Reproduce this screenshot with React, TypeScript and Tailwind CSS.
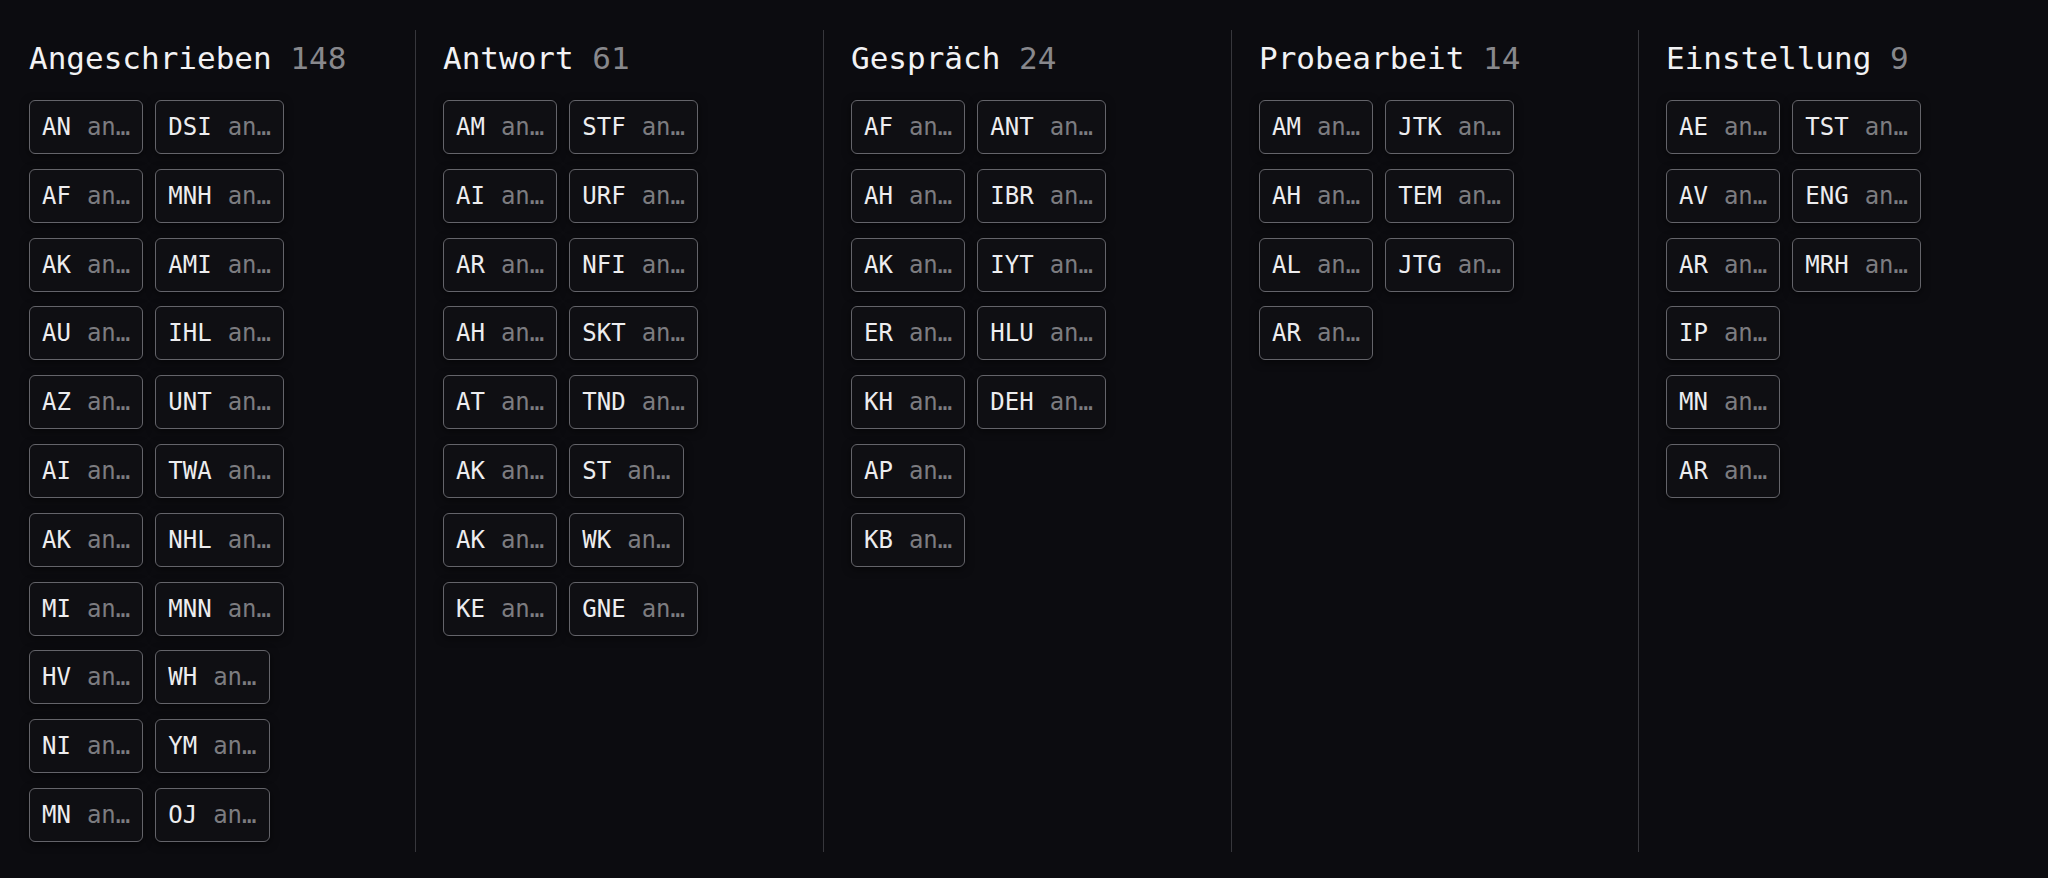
import React from 'react';

type Stage = {
  title: string;
  count: number;
  left: string[];
  right: string[];
};

const stages: Stage[] = [
  {
    title: 'Angeschrieben',
    count: 148,
    left: ['AN', 'AF', 'AK', 'AU', 'AZ', 'AI', 'AK', 'MI', 'HV', 'NI', 'MN'],
    right: ['DSI', 'MNH', 'AMI', 'IHL', 'UNT', 'TWA', 'NHL', 'MNN', 'WH', 'YM', 'OJ'],
  },
  {
    title: 'Antwort',
    count: 61,
    left: ['AM', 'AI', 'AR', 'AH', 'AT', 'AK', 'AK', 'KE'],
    right: ['STF', 'URF', 'NFI', 'SKT', 'TND', 'ST', 'WK', 'GNE'],
  },
  {
    title: 'Gespräch',
    count: 24,
    left: ['AF', 'AH', 'AK', 'ER', 'KH', 'AP', 'KB'],
    right: ['ANT', 'IBR', 'IYT', 'HLU', 'DEH'],
  },
  {
    title: 'Probearbeit',
    count: 14,
    left: ['AM', 'AH', 'AL', 'AR'],
    right: ['JTK', 'TEM', 'JTG'],
  },
  {
    title: 'Einstellung',
    count: 9,
    left: ['AE', 'AV', 'AR', 'IP', 'MN', 'AR'],
    right: ['TST', 'ENG', 'MRH'],
  },
];

const widths = ['w-[415px]', 'w-[408px]', 'w-[408px]', 'w-[407px]', 'w-[410px]'];

function Card({ code }: { code: string }) {
  return (
    <div className="flex h-[54px] w-fit items-center gap-4 rounded-md border border-[#64646a] bg-[#0f0f13] px-3 shadow-[0_2px_8px_rgba(0,0,0,0.55)]">
      <span className="whitespace-nowrap text-[24px] leading-none text-[#ededef]">{code}</span>
      <span className="whitespace-nowrap text-[24px] leading-none text-[#7c7c80]">an…</span>
    </div>
  );
}

function StageColumn({ stage, index }: { stage: Stage; index: number }) {
  const first = index === 0;
  return (
    <section
      className={`${widths[index]} h-[822px] shrink-0 pt-[9px] ${
        first ? 'pl-[29px]' : 'border-l border-[#37373c] pl-[27px]'
      }`}
    >
      <h2 className="h-[38px] whitespace-nowrap text-[31px] leading-[38px] text-[#f2f2f4]">
        {stage.title} <span className="text-[#88888c]">{stage.count}</span>
      </h2>
      <div className="mt-[23px] flex gap-3">
        <div className="flex flex-col items-start gap-y-[14.8px]">
          {stage.left.map((code, i) => (
            <Card key={i} code={code} />
          ))}
        </div>
        <div className="flex flex-col items-start gap-y-[14.8px]">
          {stage.right.map((code, i) => (
            <Card key={i} code={code} />
          ))}
        </div>
      </div>
    </section>
  );
}

export default function App() {
  return (
    <div className="h-[878px] w-full overflow-hidden bg-[#0c0c10] pt-[30px] font-['DejaVu_Sans_Mono',monospace]">
      <div className="flex">
        {stages.map((stage, i) => (
          <StageColumn key={stage.title} stage={stage} index={i} />
        ))}
      </div>
    </div>
  );
}
